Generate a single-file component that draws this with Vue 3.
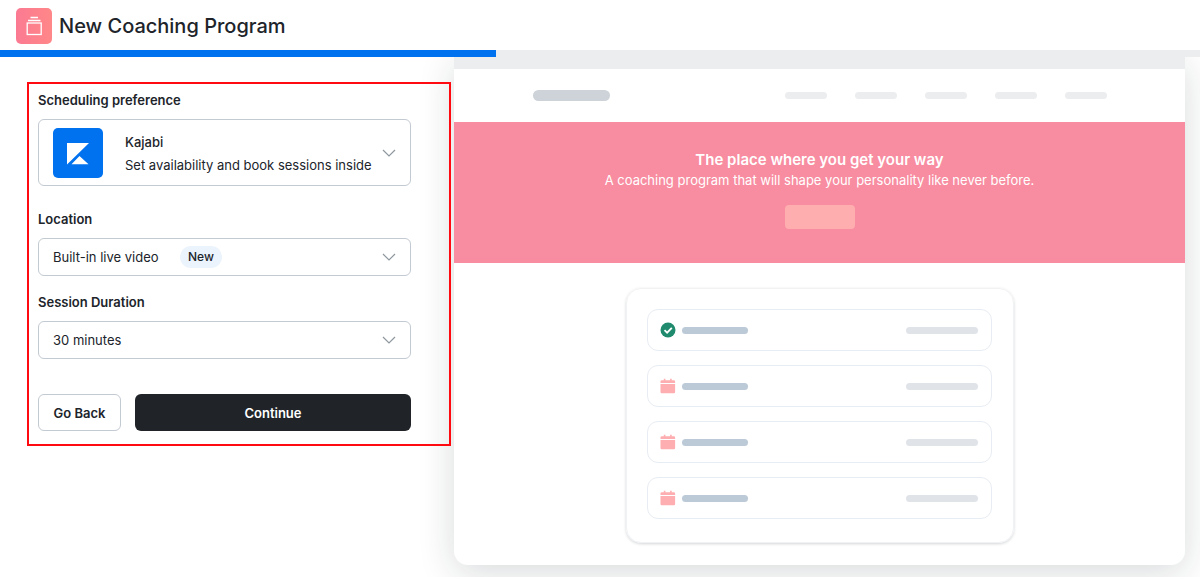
<script setup>
import { ref } from 'vue'

const step = ref(496)
const total = 1200
const scheduling = ref('Kajabi')
const place = ref('Built-in live video')
const duration = ref('30 minutes')
const sessions = [
  { id: 1, done: true },
  { id: 2, done: false },
  { id: 3, done: false },
  { id: 4, done: false },
]
</script>

<template>
  <div class="page">
    <header class="header">
      <span class="logo">
        <svg viewBox="0 0 36 36" width="36" height="36" aria-hidden="true">
          <defs>
            <linearGradient id="brand" x1="0" x2="1" y1="0" y2="0">
              <stop offset="0" stop-color="#fb7a92" />
              <stop offset="1" stop-color="#ff8788" />
            </linearGradient>
          </defs>
          <rect width="36" height="36" rx="5" fill="url(#brand)" />
          <g fill="none" stroke="#fff" stroke-width="1.3">
            <rect x="11.2" y="15" width="14" height="11.500" />
            <path d="M12 12.500h12.500M14.500 9.500h7.500" />
          </g>
        </svg>
      </span>
      <h1>New Coaching Program</h1>
    </header>
    <div class="progress" role="progressbar" aria-label="Setup progress" :aria-valuenow="step" aria-valuemin="0" :aria-valuemax="total">
      <div class="bar" :style="{ width: (step / total) * 100 + '%' }"></div>
    </div>

    <main class="main">
      <form class="form" @submit.prevent>
        <label for="scheduling">Scheduling preference</label>
        <div class="field provider">
          <select id="scheduling" v-model="scheduling" aria-describedby="scheduling-note">
            <option>Kajabi</option>
          </select>
          <svg class="mark" viewBox="0 0 50 50" width="50" height="50" aria-hidden="true">
            <rect width="50" height="50" rx="5" fill="#0072ef" />
            <path d="M14 15h22L14 36.500zM26.500 28l9 8.200H18.500z" fill="#fff" />
          </svg>
          <span id="scheduling-note" class="note">Set availability and book sessions inside</span>
          <svg class="chevron" viewBox="0 0 14 8" width="14" height="8" aria-hidden="true"><path d="M1 1l6 6 6-6" /></svg>
        </div>

        <label for="place">Location</label>
        <div class="field">
          <select id="place" v-model="place">
            <option>Built-in live video</option>
          </select>
          <span class="badge">New</span>
          <svg class="chevron" viewBox="0 0 14 8" width="14" height="8" aria-hidden="true"><path d="M1 1l6 6 6-6" /></svg>
        </div>

        <label for="duration">Session Duration</label>
        <div class="field">
          <select id="duration" v-model="duration">
            <option>30 minutes</option>
            <option>60 minutes</option>
          </select>
          <svg class="chevron" viewBox="0 0 14 8" width="14" height="8" aria-hidden="true"><path d="M1 1l6 6 6-6" /></svg>
        </div>

        <div class="actions">
          <button type="button" class="back">Go Back</button>
          <button type="submit" class="continue">Continue</button>
        </div>
      </form>

      <section class="preview" aria-label="Preview">
        <div class="strip"></div>
        <div class="nav">
          <span class="brand"></span>
          <div class="links"><i v-for="n in 5" :key="n"></i></div>
        </div>
        <div class="hero">
          <h2>The place where you get your way</h2>
          <p>A coaching program that will shape your personality like never before.</p>
          <span class="cta"></span>
        </div>
        <div class="content">
          <ul class="card">
            <li v-for="s in sessions" :key="s.id">
              <svg v-if="s.done" viewBox="0 0 16 16" width="16" height="16" aria-hidden="true">
                <circle cx="8" cy="8" r="7.500" fill="#1f8a6d" />
                <path d="M4.500 8.200l2.600 2.500L11.800 5.800" fill="none" stroke="#fff" stroke-width="1.800" />
              </svg>
              <svg v-else viewBox="0 0 16 16" width="16" height="16" aria-hidden="true" fill="#feaeb0">
                <path d="M.5 5V3.500q0-1.200 1.200-1.200H3.800V.8h1.600v1.500h4.700V.8h1.600v1.500h2.200q1.200 0 1.200 1.200V5z" />
                <path d="M.5 6h14.600v8q0 1.200-1.200 1.200H1.700Q.5 15.200.5 14z" />
              </svg>
              <span class="name"></span>
              <span class="time"></span>
            </li>
          </ul>
        </div>
      </section>
    </main>
  </div>
</template>

<style>
body {
  margin: 0;
  background: #fff;
}
</style>

<style scoped>
.page {
  font-family: Inter, "Liberation Sans", sans-serif;
  color: #20242a;
  font-size: 13px;
  line-height: 20px;
}
.header {
  display: flex;
  align-items: center;
  gap: 7px;
  box-sizing: border-box;
  height: 50px;
  padding: 2px 16px 0;
}
.logo {
  display: flex;
}
h1 {
  margin: 0;
  font-size: 20px;
  line-height: 28px;
  font-weight: 500;
}
.progress {
  height: 7px;
  background: #ebedef;
}
.bar {
  height: 100%;
  background: #0072ef;
}
.main {
  display: grid;
  grid-template-columns: minmax(0, 454fr) minmax(0, 731fr);
  align-items: start;
  padding: 0 15px 12px 0;
  overflow: hidden;
}
.form {
  position: relative;
  z-index: 1;
  display: flex;
  flex-direction: column;
  margin: 25px 3px 0 27px;
  padding: 6px 38px 13px 9px;
  border: 2px solid #ff0a10;
}
label {
  font-weight: 600;
  margin-bottom: 9px;
}
.field {
  display: grid;
  align-items: center;
  margin-bottom: 16px;
}
.field > * {
  grid-area: 1 / 1;
}
.provider {
  margin-bottom: 23px;
}
select {
  appearance: none;
  width: 100%;
  height: 38px;
  padding: 0 40px 0 14px;
  border: 1px solid #c3cad2;
  border-radius: 6px;
  background: #fff;
  color: inherit;
  font: inherit;
}
.provider select {
  height: 67px;
  padding: 0 40px 22px 86px;
  font-weight: 500;
}
.mark {
  margin-left: 15px;
  pointer-events: none;
}
.note {
  margin: 24px 32px 0 87px;
  white-space: nowrap;
  pointer-events: none;
}
.badge {
  justify-self: start;
  margin-left: 142px;
  padding: 0 8px;
  border-radius: 11px;
  background: #ebf3fc;
  font-size: 12px;
  line-height: 22px;
  font-weight: 500;
  pointer-events: none;
}
.chevron {
  justify-self: end;
  margin-right: 15px;
  fill: none;
  stroke: #8f979f;
  stroke-width: 1.2;
  pointer-events: none;
}
.actions {
  display: flex;
  gap: 14px;
  margin-top: 19px;
}
button {
  height: 37px;
  border-radius: 6px;
  font: inherit;
  font-weight: 600;
}
.back {
  width: 83px;
  padding: 0;
  border: 1px solid #c3cad2;
  background: #fff;
  color: inherit;
}
.continue {
  flex: 1;
  border: 0;
  background: #202428;
  color: #fff;
}
.preview {
  border-radius: 0 0 14px 14px;
  background: #fff;
  box-shadow: 0 8px 36px rgba(20, 30, 35, 0.16);
}
.strip {
  height: 12px;
  background: #ebedef;
}
.nav {
  display: flex;
  align-items: center;
  justify-content: space-between;
  height: 53px;
  padding: 0 78px 0 79px;
}
.brand {
  width: 77px;
  height: 11px;
  border-radius: 6px;
  background: #cdd3d8;
}
.links {
  display: flex;
  gap: 28px;
}
.links i {
  width: 42px;
  height: 7px;
  border-radius: 4px;
  background: #ebedef;
}
.hero {
  display: flex;
  flex-direction: column;
  align-items: center;
  padding: 28px 16px 34px;
  background: #f88ca0;
  color: #fff;
  text-align: center;
}
h2 {
  margin: 0;
  font-size: 15px;
  line-height: 20px;
  font-weight: 600;
}
p {
  margin: 0;
}
.cta {
  width: 70px;
  height: 24px;
  margin-top: 15px;
  border-radius: 4px;
  background: #feaeae;
}
.content {
  padding: 25px 16px 22px;
}
.card {
  display: flex;
  flex-direction: column;
  gap: 14px;
  box-sizing: border-box;
  max-width: 388px;
  margin: 0 auto;
  padding: 20px 21px 23px 20px;
  border: 1px solid #f1f2f4;
  border-radius: 15px;
  box-shadow: 0 1px 3px rgba(40, 50, 60, 0.2);
  list-style: none;
}
li {
  display: flex;
  align-items: center;
  height: 40px;
  padding: 0 13px 0 12px;
  border: 1px solid #e8edf3;
  border-radius: 11px;
}
.name {
  width: 66px;
  height: 7px;
  margin-left: 6px;
  border-radius: 4px;
  background: #bcc9d7;
}
.time {
  width: 72px;
  height: 7px;
  margin-left: auto;
  border-radius: 4px;
  background: #e0e4e9;
}
</style>
